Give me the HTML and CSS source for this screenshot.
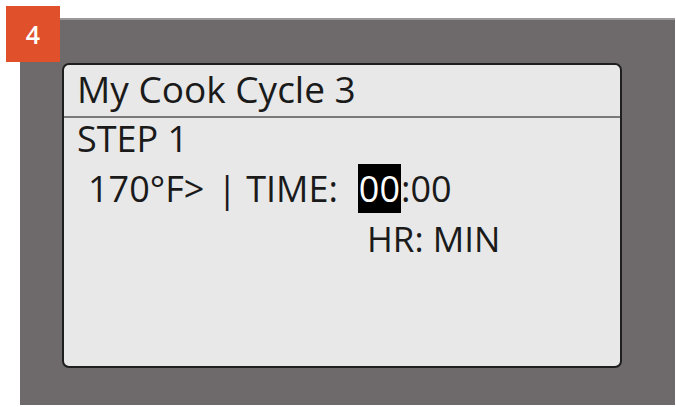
FILE: index.html
```html
<!DOCTYPE html>
<html>
<head>
<meta charset="utf-8">
<link rel="stylesheet" href="styles.css">
</head>
<body>
<div class="stage">
  <div class="badge">4</div>
  <div class="frame">
    <div class="screen">
      <div class="title">My Cook Cycle 3</div>
      <div class="body">
        <div class="line step">STEP 1</div>
        <div class="line temp"><span>170°F&gt;</span><span class="bar">|</span><span class="label">TIME:</span><span class="time"><span class="sel">00</span>:00</span></div>
        <div class="line units">HR: MIN</div>
      </div>
    </div>
  </div>
</div>
</body>
</html>
```
FILE: styles.css
```css
html, body {
  margin: 0;
  padding: 0;
  background: #ffffff;
}
.stage {
  position: relative;
  width: 676px;
  height: 407px;
  padding: 18px 1px 2px 20px;
  box-sizing: border-box;
  font-family: "Open Sans", "DejaVu Sans", sans-serif;
}
.badge {
  position: absolute;
  left: 6px;
  top: 6px;
  width: 54px;
  height: 56px;
  background: #e0502a;
  color: #ffffff;
  font-size: 25px;
  font-weight: 600;
  line-height: 1;
  display: flex;
  align-items: center;
  justify-content: center;
}
.frame {
  height: 100%;
  background: #6e6a6b;
  border-top: 2px solid #9b9899;
  box-sizing: border-box;
  padding: 43px 53px 37px 42px;
}
.screen {
  height: 100%;
  box-sizing: border-box;
  background: #e8e8e8;
  border: 2px solid #1e1e1e;
  border-radius: 7px;
  color: #1a1a1a;
  font-size: 36px;
}
.title {
  height: 53px;
  box-sizing: border-box;
  border-bottom: 2px solid #7a7a7a;
  padding-left: 13px;
  font-size: 37px;
  line-height: 48px;
}
.body {
  padding-left: 13px;
  margin-top: -4px;
}
.line {
  line-height: 50px;
  white-space: nowrap;
}
.temp {
  display: flex;
  align-items: baseline;
  padding-left: 11px;
}
.bar {
  margin-left: 13px;
  margin-right: 9px;
}
.label {
  margin-right: 20px;
}
.sel {
  background: #000;
  color: #fff;
  padding: 0 1px;
}
.units {
  padding-left: 290px;
  font-size: 35px;
}
```
